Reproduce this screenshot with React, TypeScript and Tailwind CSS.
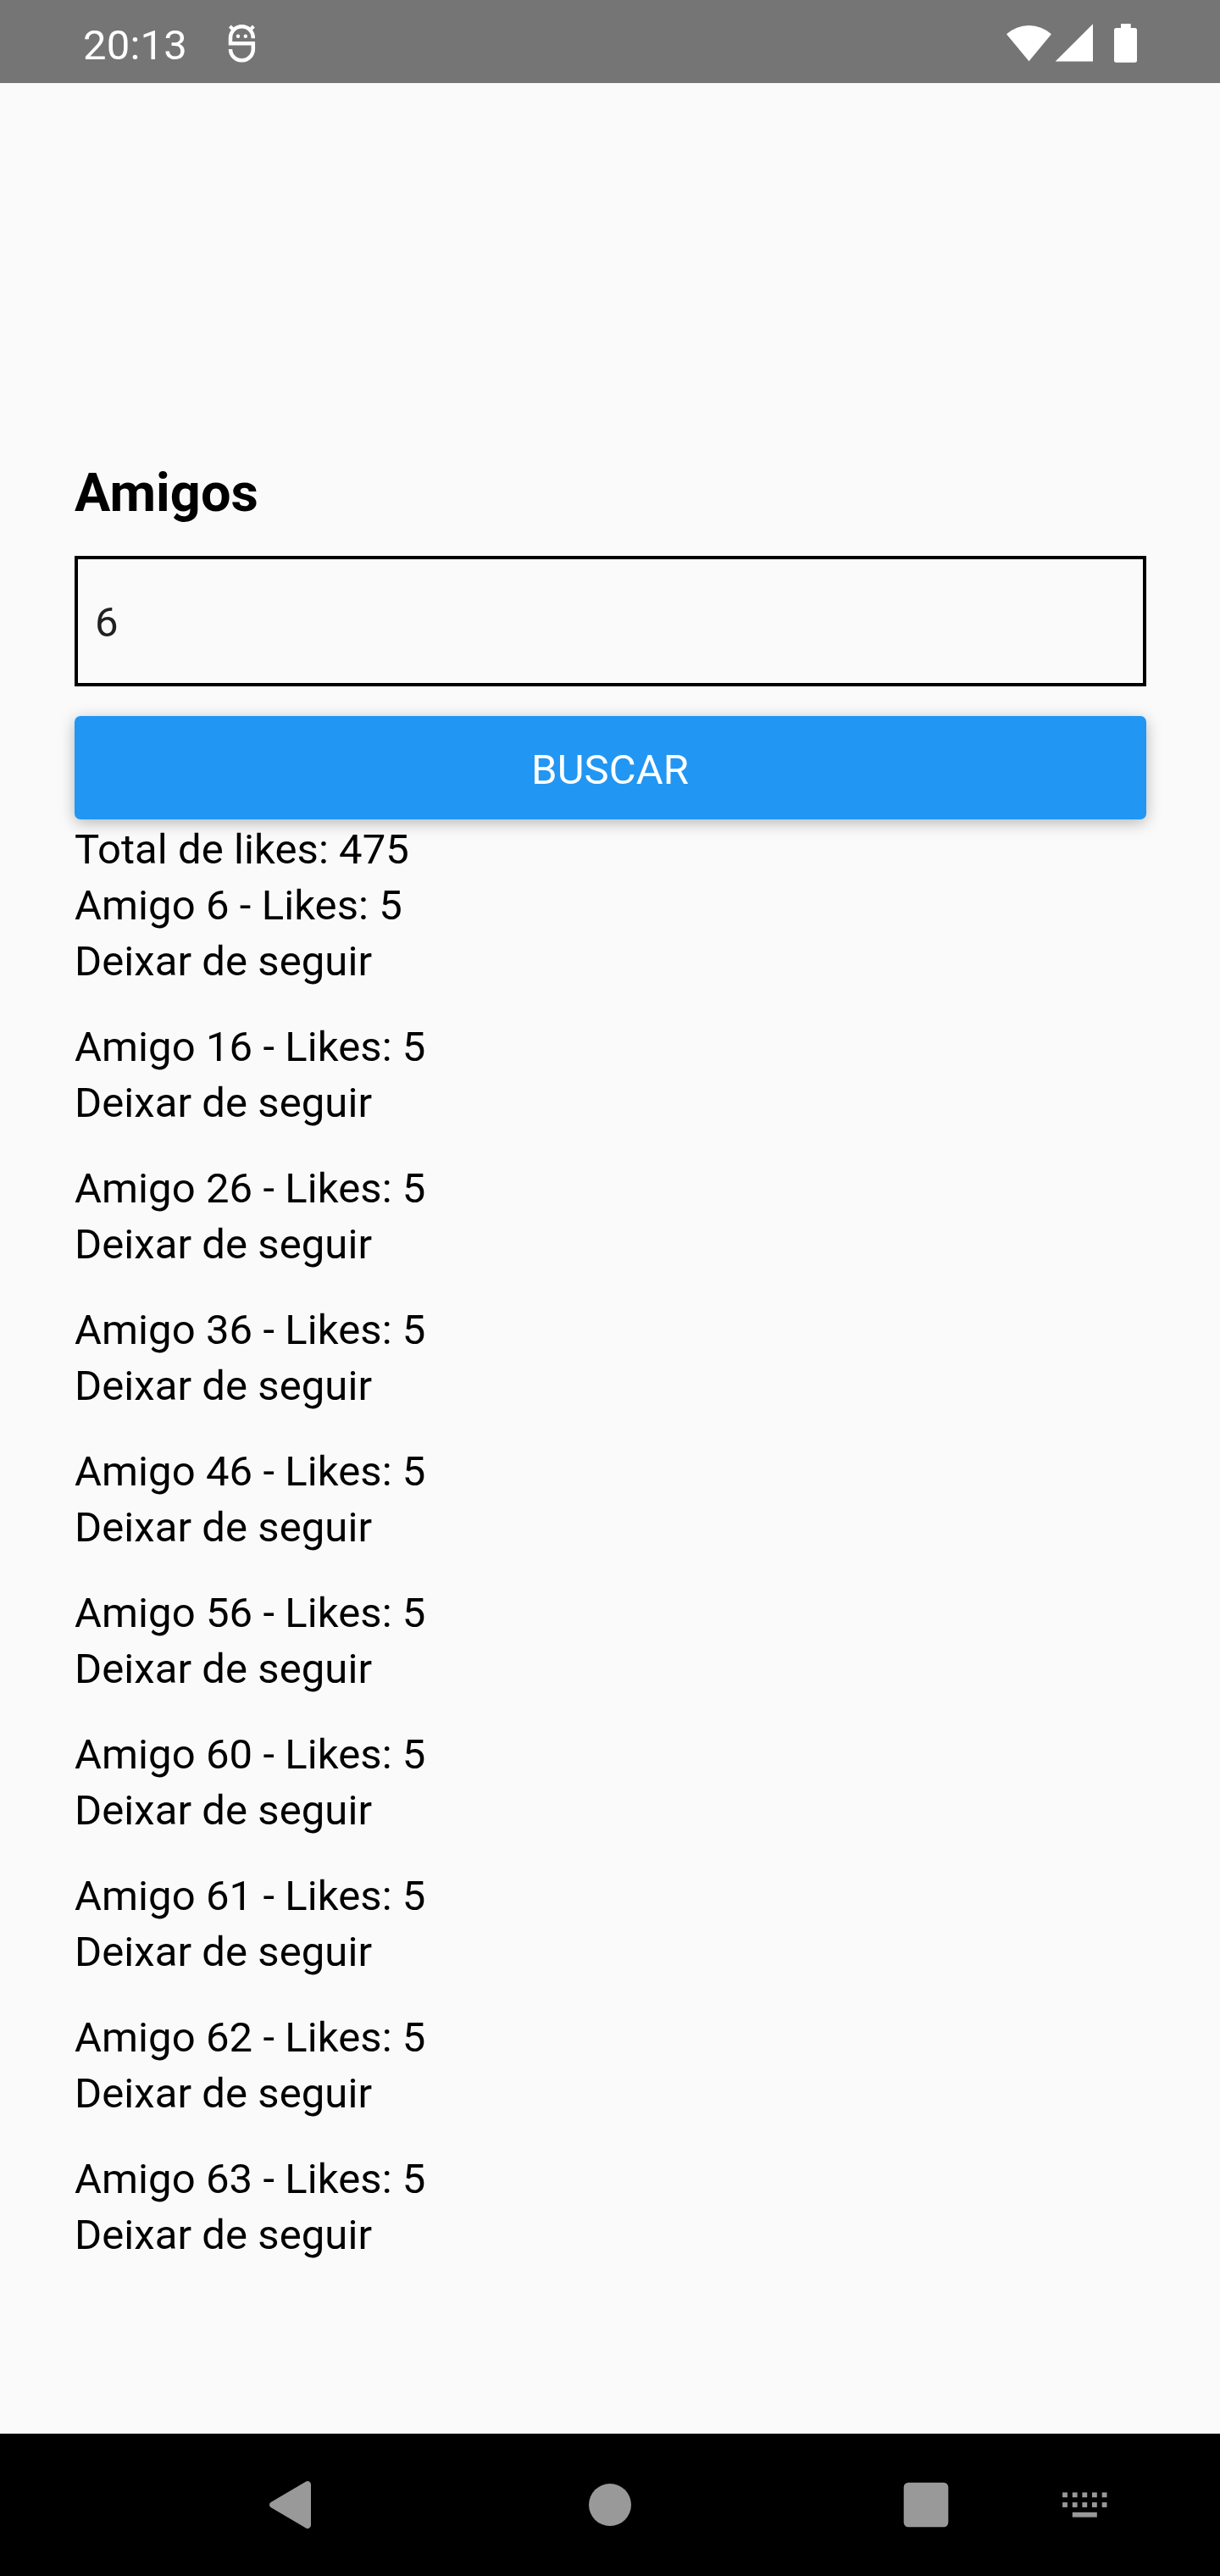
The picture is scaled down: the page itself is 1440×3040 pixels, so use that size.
const friends = [6, 16, 26, 36, 46, 56, 60, 61, 62, 63];

function DebugIcon() {
  return (
    <svg className="mt-[4px] ml-[45px] h-[50px] w-[38px]" viewBox="266 26 38 50" fill="none" stroke="white">
      <path
        d="M298.8 45.3V44.7A13.4 13.4 0 0 0 272 44.7V51.3H298.8V57.9A13.4 13.4 0 0 1 272 57.9"
        strokeWidth="4.5"
      />
      <path d="M271.4 31L276.4 36M299.4 31L294.4 36" strokeWidth="4" />
      <circle cx="281" cy="42.7" r="2.2" fill="white" stroke="none" />
      <circle cx="289.8" cy="42.7" r="2.2" fill="white" stroke="none" />
    </svg>
  );
}

function StatusBar() {
  return (
    <header className="flex h-[98px] shrink-0 items-center justify-between bg-[#757575] pr-[94px] pl-[98px] text-white">
      <div className="flex items-center">
        <span className="mt-[10px] leading-[66px] tracking-[0.2px]">20:13</span>
        <DebugIcon />
      </div>
      <svg className="mt-[4px] h-[50px] w-[160px]" viewBox="1186 26 160 50" fill="white">
        <path d="M1214.5 72.3L1188 40.3A39.5 39.5 0 0 1 1241 40.3Z" />
        <path d="M1245.6 72.5L1290 28.3V72.5Z" />
        <path d="M1323 28H1334.7V33H1339.5Q1342 33 1342 35.5V71.2Q1342 73.7 1339.5 73.7H1317.5Q1315 73.7 1315 71.2V35.5Q1315 33 1317.5 33H1323Z" />
      </svg>
    </header>
  );
}

function NavBar() {
  return (
    <nav className="flex h-[168px] shrink-0 items-center bg-black pl-[318px] text-[#999999]">
      <svg className="h-[56px] w-[49px]" viewBox="318 2928 49 56" fill="currentColor">
        <path d="M319.6 2952.9L361.2 2928.6Q363.3 2927.4 365.3 2928.7Q367 2929.9 367 2932V2980Q367 2982.1 365.3 2983.3Q363.3 2984.6 361.2 2983.4L319.6 2959.1Q318 2958 318 2956Q318 2954 319.6 2952.9Z" />
      </svg>
      <div className="ml-[328px] size-[50px] rounded-full bg-current" />
      <svg className="ml-[321px] size-[54px]" viewBox="0 0 54 54" fill="currentColor">
        <rect x="0.7" y="0.7" width="52.6" height="52.6" rx="5.5" />
      </svg>
      <svg className="ml-[134px] h-[30px] w-[53px]" viewBox="0 0 53 30" fill="currentColor">
        {[0.1, 11.8, 23.4, 35, 46.7].map((x) => (
          <g key={x}>
            <rect x={x} y="0.4" width="5.8" height="5.8" />
            <rect x={x} y="12.1" width="5.8" height="5.8" />
          </g>
        ))}
        <rect x="11.8" y="23.8" width="29" height="5.8" />
      </svg>
    </nav>
  );
}

export default function App() {
  return (
    <div className="flex h-[3040px] w-[1440px] flex-col bg-[#fafafa] font-['Roboto',sans-serif] text-[49px] leading-[66px] tracking-[0.08px] text-black">
      <StatusBar />
      <main className="flex flex-1 flex-col pt-[442px] pr-[87px] pl-[88px]">
        <h1 className="text-[63px] leading-[84px] font-bold">Amigos</h1>
        <div className="mt-[32px] flex h-[154px] items-center border-4 border-black px-[20px] pt-[4px] text-[#212121]">6</div>
        <button className="mt-[35px] h-[122px] shrink-0 rounded-[7px] bg-[#2196f3] pt-[6px] pr-[1px] text-white shadow-[0_4px_18px_rgba(0,0,0,0.27)]">
          BUSCAR
        </button>
        <p className="relative pt-[3px]">Total de likes: 475</p>
        <ul className="relative flex flex-col gap-[35px]">
          {friends.map((n) => (
            <li key={n}>
              <p>Amigo {n} - Likes: 5</p>
              <p>Deixar de seguir</p>
            </li>
          ))}
        </ul>
      </main>
      <NavBar />
    </div>
  );
}
